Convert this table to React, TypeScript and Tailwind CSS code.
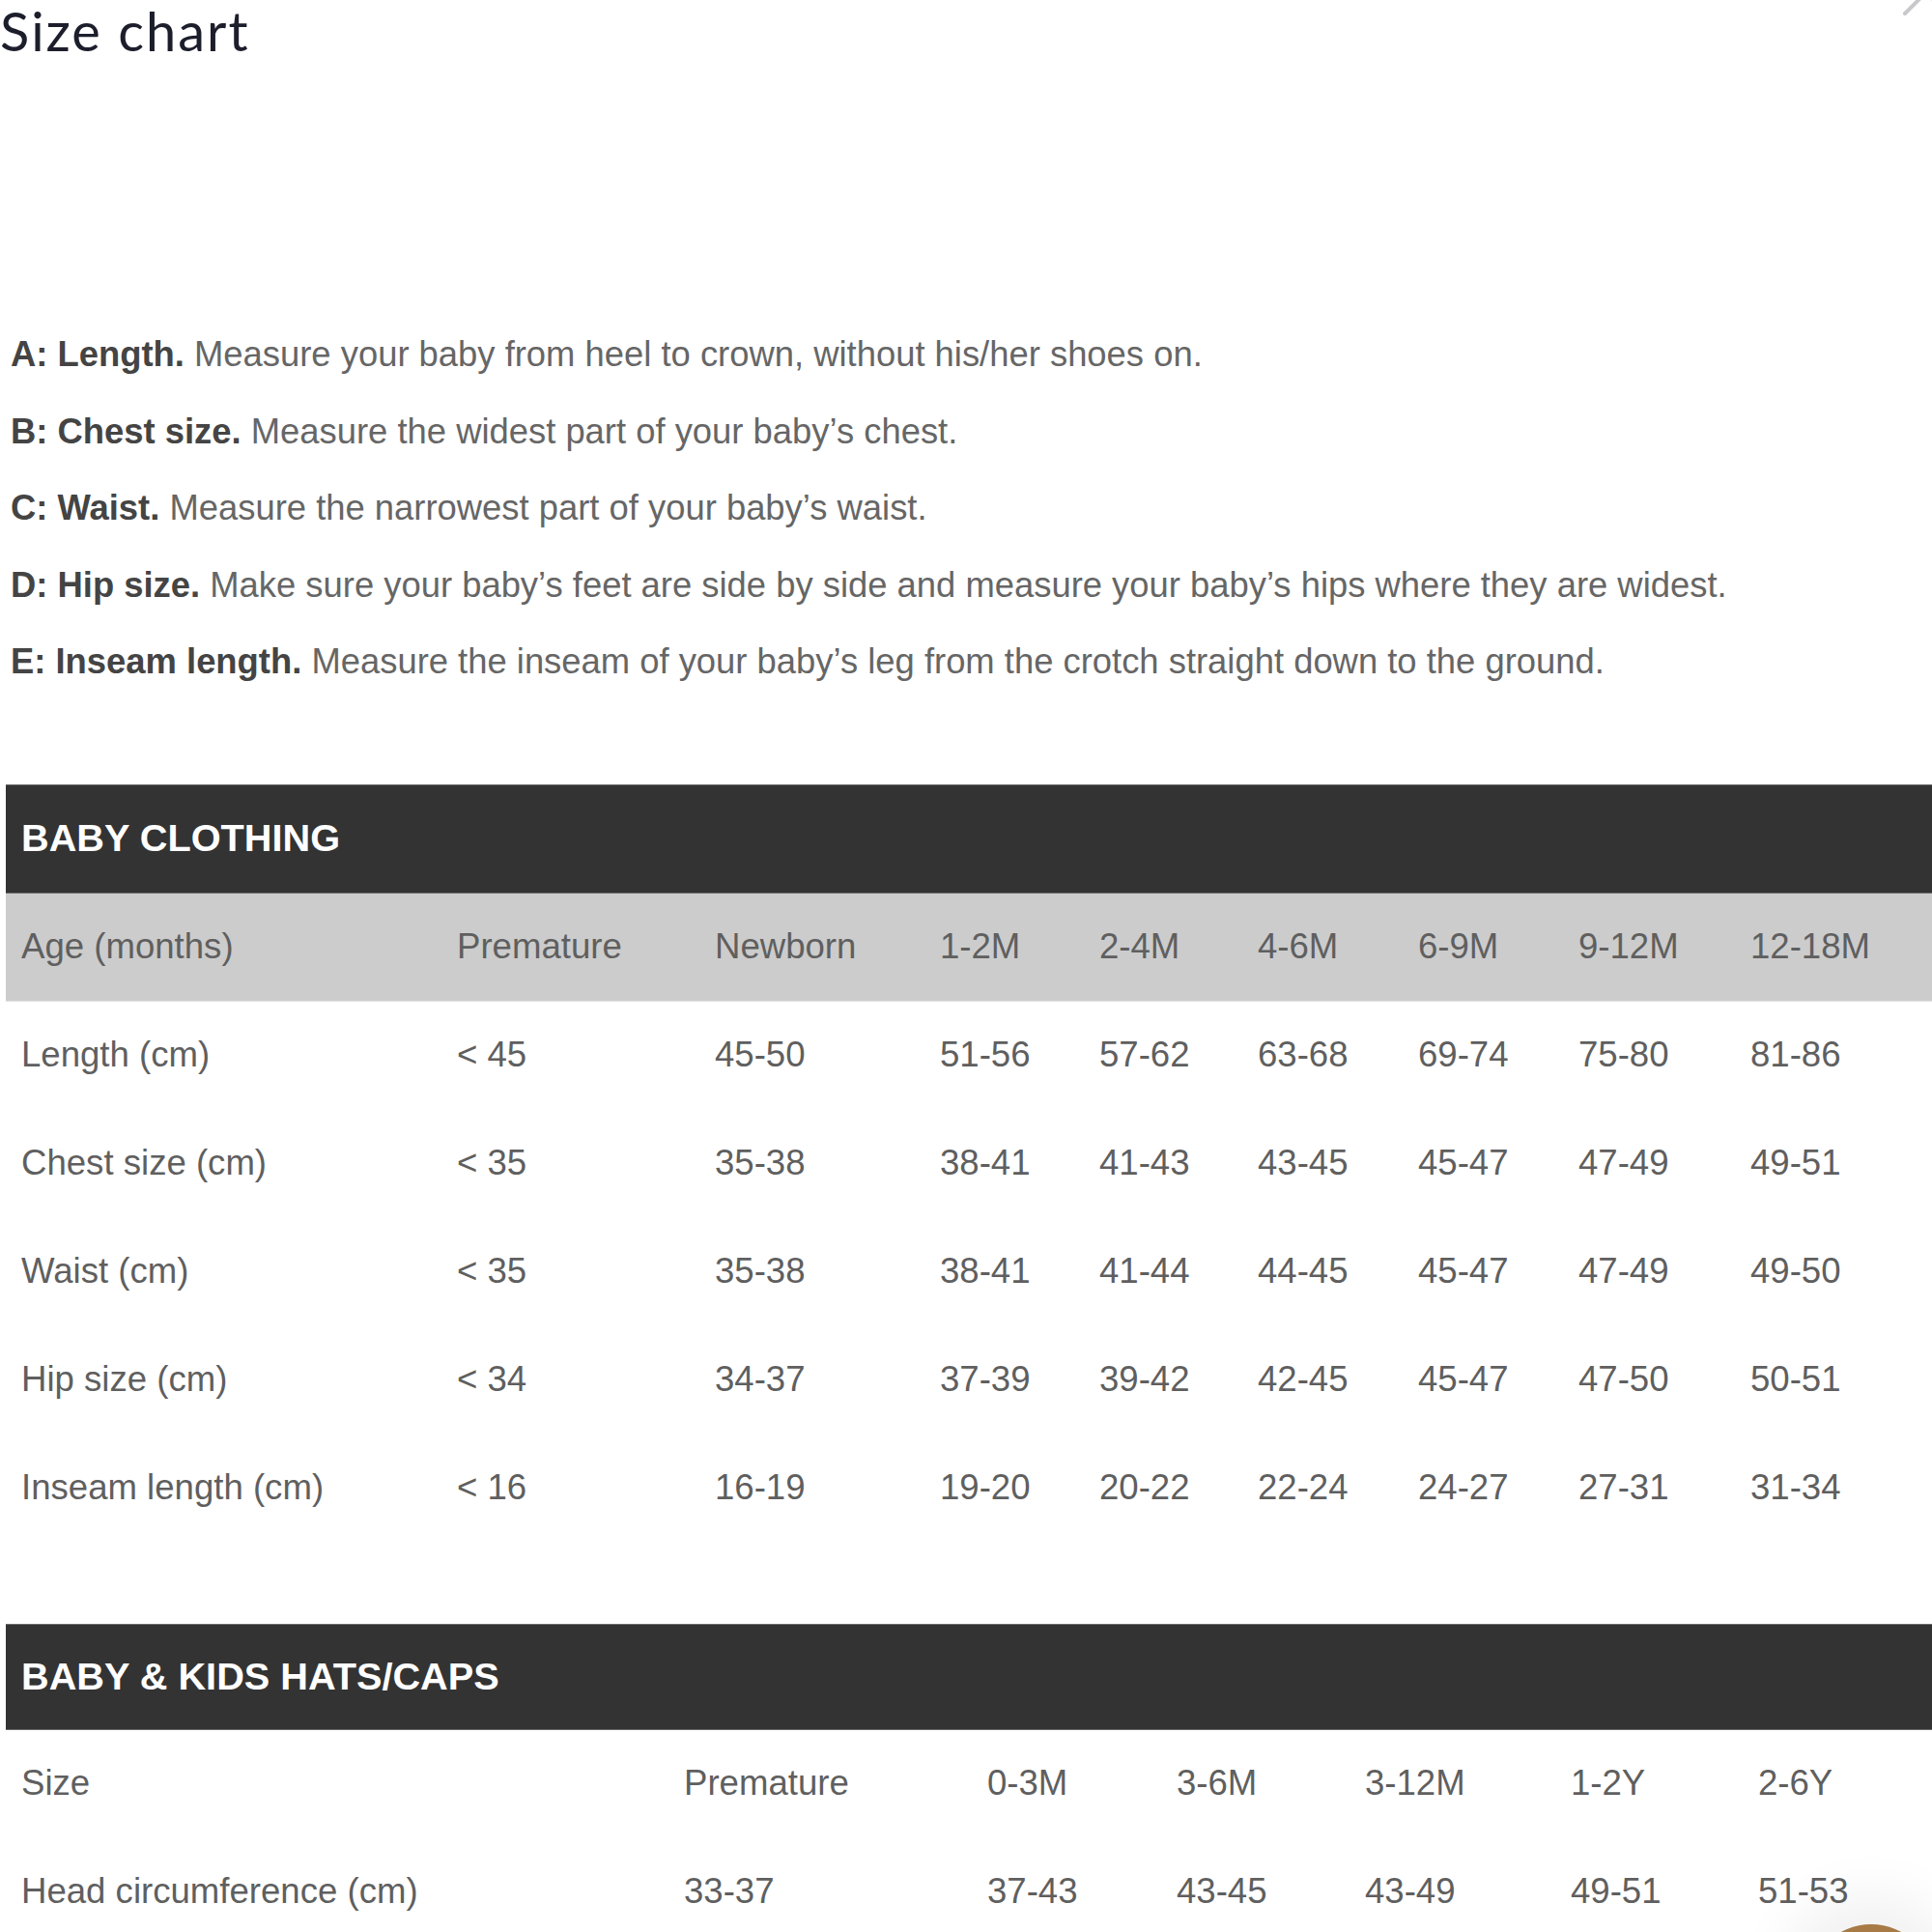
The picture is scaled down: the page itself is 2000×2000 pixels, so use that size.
import React from "react";

const clothingCols = ["w-[451px]", "w-[267px]", "w-[233px]", "w-[165px]", "w-[164px]", "w-[166px]", "w-[166px]", "w-[178px]", "w-[210px]"];
const clothingHead = ["Age (months)", "Premature", "Newborn", "1-2M", "2-4M", "4-6M", "6-9M", "9-12M", "12-18M"];
const clothingRows = [
  ["Length (cm)", "< 45", "45-50", "51-56", "57-62", "63-68", "69-74", "75-80", "81-86"],
  ["Chest size (cm)", "< 35", "35-38", "38-41", "41-43", "43-45", "45-47", "47-49", "49-51"],
  ["Waist (cm)", "< 35", "35-38", "38-41", "41-44", "44-45", "45-47", "47-49", "49-50"],
  ["Hip size (cm)", "< 34", "34-37", "37-39", "39-42", "42-45", "45-47", "47-50", "50-51"],
  ["Inseam length (cm)", "< 16", "16-19", "19-20", "20-22", "22-24", "24-27", "27-31", "31-34"],
];

const hatCols = ["w-[686px]", "w-[314px]", "w-[196px]", "w-[195px]", "w-[213px]", "w-[194px]", "w-[210px]"];
const hatRows = [
  ["Size", "Premature", "0-3M", "3-6M", "3-12M", "1-2Y", "2-6Y"],
  ["Head circumference (cm)", "33-37", "37-43", "43-45", "43-49", "49-51", "51-53"],
];

const descriptions: [string, string][] = [
  ["A: Length.", " Measure your baby from heel to crown, without his/her shoes on."],
  ["B: Chest size.", " Measure the widest part of your baby\u2019s chest."],
  ["C: Waist.", " Measure the narrowest part of your baby\u2019s waist."],
  ["D: Hip size.", " Make sure your baby\u2019s feet are side by side and measure your baby\u2019s hips where they are widest."],
  ["E: Inseam length.", " Measure the inseam of your baby\u2019s leg from the crotch straight down to the ground."],
];

function Row({ cells, cols, className = "" }: { cells: string[]; cols: string[]; className?: string }) {
  return (
    <div className={`flex h-[112px] items-center ${className}`}>
      {cells.map((c, i) => (
        <div key={i} className={`${cols[i]} shrink-0 pl-[16px] whitespace-nowrap`}>
          {c}
        </div>
      ))}
    </div>
  );
}

export default function App() {
  return (
    <div
      className="relative w-[2000px] h-[2000px] overflow-hidden bg-white"
      style={{ fontFamily: '"Liberation Sans", Arial, sans-serif' }}
    >
      {/* close icon, partially off-screen */}
      <svg className="absolute left-[1960px] top-[-40px] w-[70px] h-[70px]" viewBox="0 0 70 70">
        <line x1="12" y1="54" x2="56" y2="10" stroke="#c8c8cc" strokeWidth="4" strokeLinecap="round" />
        <line x1="12" y1="10" x2="56" y2="54" stroke="#c8c8cc" strokeWidth="4" strokeLinecap="round" />
      </svg>

      <h1
        className="h-[64px] text-[56px] leading-[64px] tracking-[2px] text-[#1d1e2c] whitespace-nowrap"
        style={{ fontFamily: 'Lato, "Noto Sans", sans-serif' }}
      >
        Size chart
      </h1>

      <div className="mt-[263px] pl-[11px] text-[36.4px] leading-[79.5px] text-[#666666]">
        {descriptions.map(([b, r], i) => (
          <p key={i} className="whitespace-nowrap">
            <b className="font-bold text-[#444444]">{b}</b>
            {r}
          </p>
        ))}
      </div>

      {/* Baby clothing table */}
      <div className="mt-[87px] ml-[6px] text-[36.6px] text-[#5f5f5f]">
        <div className="flex h-[113px] items-center border-y border-[#6a6a6a] bg-[#333333] pl-[16px] text-[39.7px] font-bold text-white">
          BABY CLOTHING
        </div>
        <Row cells={clothingHead} cols={clothingCols} className="h-[111px] bg-[#cccccc] border-b border-[#e4e4e4]" />
        {clothingRows.map((r, i) => (
          <Row key={i} cells={r} cols={clothingCols} />
        ))}
      </div>

      {/* Hats table */}
      <div className="mt-[84px] ml-[6px] text-[36.6px] text-[#5f5f5f]">
        <div className="flex h-[110px] items-center border-y border-[#6a6a6a] bg-[#333333] pl-[16px] text-[39.7px] font-bold text-white">
          BABY &amp; KIDS HATS/CAPS
        </div>
        {hatRows.map((r, i) => (
          <Row key={i} cells={r} cols={hatCols} />
        ))}
      </div>

      {/* chat bubble, mostly off-screen */}
      <div className="absolute left-[1872px] top-[1992px] w-[130px] h-[130px] rounded-full bg-[#a87a45] shadow-[0_0_60px_30px_rgba(0,0,0,0.06)]" />
    </div>
  );
}
